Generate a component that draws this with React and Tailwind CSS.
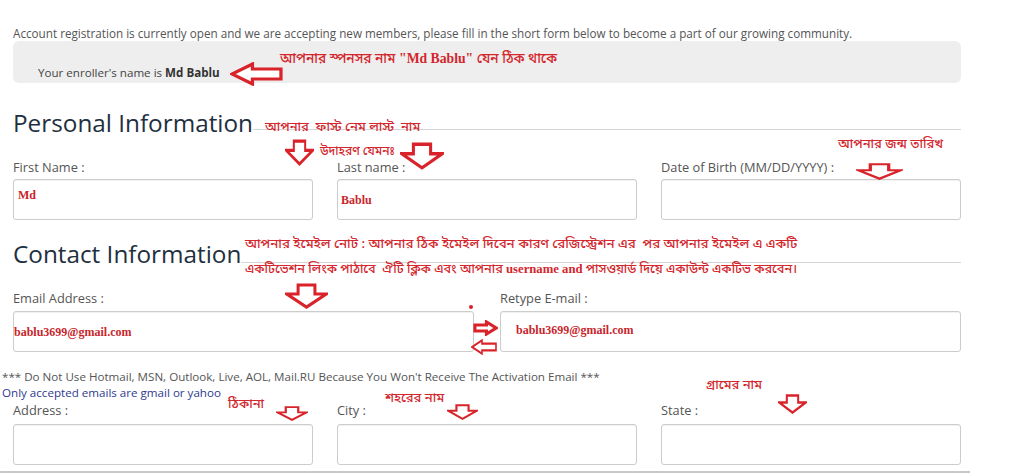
const bn = { fontFamily: '"Noto Sans Bengali", "Noto Serif Bengali", "Lohit Bengali", "FreeSerif", "Noto Sans", sans-serif' }
const serif = { fontFamily: '"Liberation Serif", serif' }

const shapes = {
  down: { vb: '0 0 46 26', pts: '14,2 32,2 32,11 44,11 23,24 2,11 14,11' },
  left: { vb: '0 0 52 24', pts: '50,7 22,7 22,2 2,12 22,22 22,17 50,17' },
  right: { vb: '0 0 26 16', pts: '2,5 14,5 14,2 24,8 14,14 14,11 2,11' },
}

function Arrow({ dir = 'down', className }) {
  const s = shapes[dir]
  return (
    <svg viewBox={s.vb} preserveAspectRatio="none" className={'absolute ' + className}>
      <polygon points={s.pts} fill="white" stroke="#d9232b" strokeWidth="3.2" strokeLinejoin="miter" />
    </svg>
  )
}

function Note({ className, children }) {
  return (
    <div style={bn} className={'absolute whitespace-nowrap text-[#d3262d] leading-none font-medium ' + className}>
      {children}
    </div>
  )
}

function Field({ label, children, className = '' }) {
  return (
    <div>
      <div className={'text-[12.8px] leading-[16px] text-[#555] mb-[4px] ' + className}>{label}</div>
      <div className="h-[41px] rounded-[3px] border border-[#ccc] bg-white shadow-[inset_0_1px_1px_rgba(0,0,0,0.06)]">
        {children}
      </div>
    </div>
  )
}

function Heading({ children, lineTop }) {
  return (
    <div className="flex items-start">
      <h2 className="text-[24.3px] leading-[32px] text-[#1e3040] whitespace-nowrap">{children}</h2>
      <div className={'flex-1 border-t border-[#d5d5d5] ' + lineTop} />
    </div>
  )
}

export default function App() {
  return (
    <div className="relative w-[1024px] h-[474px] overflow-hidden bg-white" style={{ fontFamily: '"Open Sans", sans-serif' }}>
      <div className="w-[961px] pl-[13px] pt-[25px]">
        <p className="text-[11.7px] leading-[16px] text-[#555] whitespace-nowrap">
          Account registration is currently open and we are accepting new members, please fill in the short form below to become a part of our growing community.
        </p>
        <div className="h-[42px] rounded-[6px] bg-[#eeeeee] pl-[25px] pt-[24px] text-[11.6px] leading-[16px] text-[#444]">
          Your enroller's name is <b className="text-[#333]">Md Bablu</b>
        </div>

        <div className="mt-[24px]">
          <Heading lineTop="mt-[22px]">Personal Information</Heading>
        </div>
        <div className="mt-[20px] grid grid-cols-3 gap-[24px]">
          <Field label="First Name :">
            <div style={serif} className="pl-[4px] pt-[6px] text-[12px] font-bold text-[#c8262c]">Md</div>
          </Field>
          <Field label="Last name :">
            <div style={serif} className="pl-[3px] pt-[11px] text-[12px] font-bold text-[#c8262c]">Bablu</div>
          </Field>
          <Field label="Date of Birth (MM/DD/YYYY) :" />
        </div>

        <div className="mt-[18px]">
          <Heading lineTop="mt-[24px]">Contact Information</Heading>
        </div>
        <div className="mt-[20px] grid grid-cols-2 gap-[26px]">
          <Field label="Email Address :" className="mb-[5px]">
            <div style={serif} className="pl-0 pt-[11px] text-[12px] font-bold text-[#c8262c]">bablu3699@gmail.com</div>
          </Field>
          <Field label="Retype E-mail :" className="mb-[5px]">
            <div style={serif} className="pl-[15px] pt-[9px] text-[12px] font-bold text-[#c8262c]">bablu3699@gmail.com</div>
          </Field>
        </div>

        <div className="-ml-[11px] mt-[17px] text-[11.6px] leading-[16px] whitespace-nowrap">
          <p className="text-[#555]">*** Do Not Use Hotmail, MSN, Outlook, Live, AOL, Mail.RU Because You Won't Receive The Activation Email ***</p>
          <p className="text-[#2f3a8f]">Only accepted emails are gmail or yahoo</p>
        </div>
        <div className="mt-[1px] grid grid-cols-3 gap-[24px]">
          <Field label="Address :" className="mb-[6px]" />
          <Field label="City :" className="mb-[6px]" />
          <Field label="State :" className="mb-[6px]" />
        </div>
      </div>
      <div className="mt-[6px] w-[970px] h-[2px] bg-[#c9c9c9]" />

      {/* red annotations pasted over the form */}
      <Arrow dir="left" className="left-[230px] top-[62px] w-[53px] h-[24px]" />
      <Note className="left-[280px] top-[52px] text-[13.7px]">
        আপনার স্পনসর নাম <span style={serif} className="font-bold">"Md Bablu"</span> যেন ঠিক থাকে
      </Note>

      <Note className="left-[265px] top-[121px] text-[13px]">আপনার&nbsp; ফাস্ট নেম লাস্ট&nbsp; নাম</Note>
      <Note className="left-[320px] top-[146px] text-[12px]">উদাহরণ যেমনঃ</Note>
      <Arrow className="left-[285px] top-[139px] w-[29px] h-[27px]" />
      <Arrow className="left-[400px] top-[142px] w-[44px] h-[28px]" />

      <Note className="left-[838px] top-[138px] text-[13px]">আপনার জন্ম তারিখ</Note>
      <Arrow className="left-[856px] top-[163px] w-[47px] h-[17px]" />

      <Note className="left-[245px] top-[238px] text-[13.3px]">
        আপনার ইমেইল নোট : আপনার ঠিক ইমেইল দিবেন কারণ রেজিস্ট্রেশন এর&nbsp; পর আপনার ইমেইল এ একটি
      </Note>
      <Note className="left-[245px] top-[263px] text-[12.7px]">
        একটিভেশন লিংক পাঠাবে&nbsp; ঐটি ক্লিক এবং আপনার <span style={serif} className="font-bold">username and</span> পাসওয়ার্ড দিয়ে একাউন্ট একটিভ করবেন।
      </Note>
      <Arrow className="left-[285px] top-[283px] w-[43px] h-[26px]" />

      <div className="absolute left-[469px] top-[305px] w-[4px] h-[4px] rounded-full bg-[#d9232b]" />
      <Arrow dir="right" className="left-[473px] top-[320px] w-[25px] h-[16px]" />
      <Arrow dir="left" className="left-[471px] top-[339px] w-[26px] h-[16px]" />

      <Note className="left-[228px] top-[398px] text-[13px]">ঠিকানা</Note>
      <Arrow className="left-[276px] top-[406px] w-[32px] h-[15px]" />
      <Note className="left-[385px] top-[392px] text-[13px]">শহরের নাম</Note>
      <Arrow className="left-[447px] top-[404px] w-[31px] h-[16px]" />
      <Note className="left-[706px] top-[379px] text-[13px]">গ্রামের নাম</Note>
      <Arrow className="left-[778px] top-[394px] w-[29px] h-[20px]" />
    </div>
  )
}
